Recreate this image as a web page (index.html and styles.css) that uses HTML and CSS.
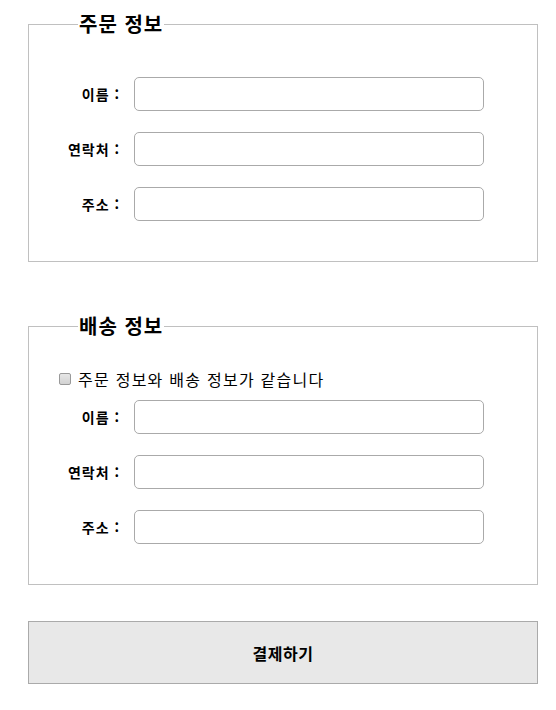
FILE: index.html
```html
<!DOCTYPE html>
<html lang="ko">
<head>
  <meta charset="UTF-8" />
  <meta name="viewport" content="width=device-width, initial-scale=1.0"/>
  <title>주문서</title>
  <link rel="stylesheet" href="styles.css">
</head>
<body>
  <form class="order">

    <fieldset class="box">
      <legend>주문 정보</legend>
      <div class="rows">
        <div class="row">
          <label for="o-name">이름 :</label>
          <input type="text" id="o-name">
        </div>
        <div class="row">
          <label for="o-tel">연락처 :</label>
          <input type="text" id="o-tel">
        </div>
        <div class="row">
          <label for="o-addr">주소 :</label>
          <input type="text" id="o-addr">
        </div>
      </div>
    </fieldset>

    <fieldset class="box">
      <legend>배송 정보</legend>
      <div class="rows ship">
        <label class="same">
          <input type="checkbox" id="same">
          주문 정보와 배송 정보가 같습니다
        </label>
        <div class="row">
          <label for="d-name">이름 :</label>
          <input type="text" id="d-name">
        </div>
        <div class="row">
          <label for="d-tel">연락처 :</label>
          <input type="text" id="d-tel">
        </div>
        <div class="row">
          <label for="d-addr">주소 :</label>
          <input type="text" id="d-addr">
        </div>
      </div>
    </fieldset>

    <button type="submit" class="pay">결제하기</button>
  </form>
</body>
</html>
```

FILE: styles.css
```css
* { box-sizing: border-box; }

body {
  margin: 0;
  font-family: "Noto Sans CJK KR", "Noto Sans", sans-serif;
  color: #000;
  background: #fff;
}

.order {
  width: 510px;
  margin: 10px 0 0 28px;
}

.box {
  margin: 0;
  padding: 0 0 40px;
  border: 1px solid #c0c0c0;
}

.box + .box { margin-top: 50px; }

.box legend {
  margin-left: 49px;
  padding: 0 1px;
  font-size: 20px;
  font-weight: bold;
  letter-spacing: 1px;
  line-height: 28px;
}

.rows {
  display: flex;
  flex-direction: column;
  gap: 21px;
  padding-top: 39px;
}

.rows.ship { padding-top: 30px; }

.row {
  display: flex;
  align-items: center;
}

.row label {
  width: 91px;
  margin-right: 14px;
  text-align: right;
  font-size: 14px;
  font-weight: bold;
  letter-spacing: 1px;
}

.row input {
  width: 350px;
  height: 34px;
  border: 1px solid #aaa;
  border-radius: 5px;
  padding: 0 8px;
  font: inherit;
}

.same {
  display: flex;
  align-items: center;
  height: 18px;
  margin: 0 0 -9px 30px;
  font-size: 16px;
  letter-spacing: 1.25px;
}

.same input {
  appearance: none;
  width: 12px;
  height: 12px;
  margin: 0 7px 0 0;
  border: 1px solid #999;
  border-radius: 2px;
  background: linear-gradient(#e6e6e6, #d2d2d2);
}

.pay {
  display: block;
  width: 510px;
  height: 63px;
  margin-top: 36px;
  border: 1px solid #aaa;
  background: #e8e8e8;
  font-family: inherit;
  font-size: 16px;
  font-weight: bold;
  letter-spacing: 0.5px;
  color: #000;
}
```
